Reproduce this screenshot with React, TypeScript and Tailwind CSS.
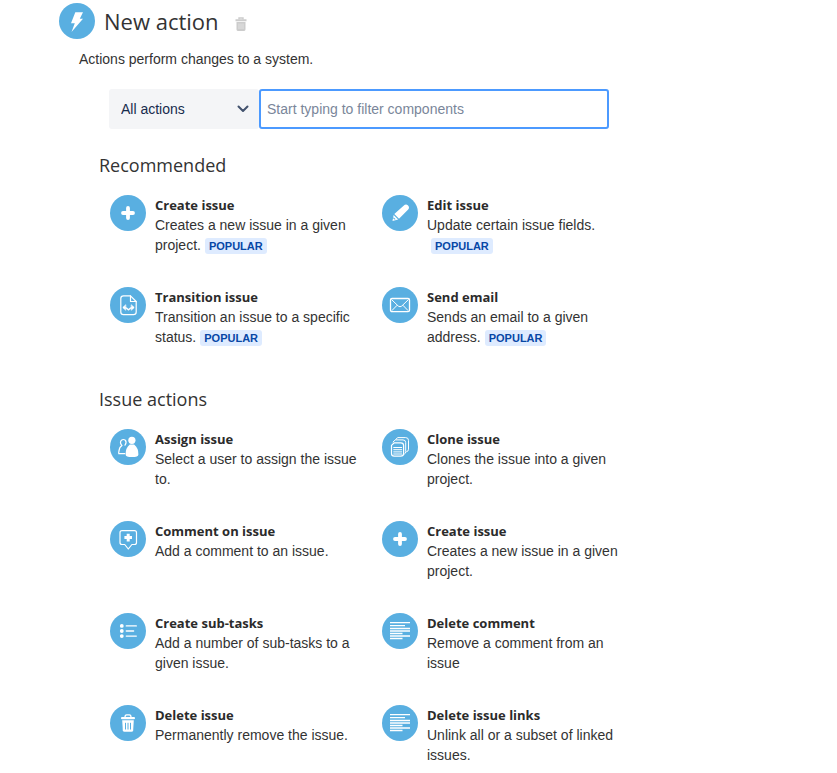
import React, { useState } from 'react';

type IconName =
  | 'bolt'
  | 'plus'
  | 'pencil'
  | 'transition'
  | 'mail'
  | 'users'
  | 'copy'
  | 'comment'
  | 'list'
  | 'text'
  | 'trash';

type Action = {
  title: string;
  description: string;
  icon: IconName;
  popular?: boolean;
};

const RECOMMENDED: Action[] = [
  { title: 'Create issue', description: 'Creates a new issue in a given project.', icon: 'plus', popular: true },
  { title: 'Edit issue', description: 'Update certain issue fields.', icon: 'pencil', popular: true },
  { title: 'Transition issue', description: 'Transition an issue to a specific status.', icon: 'transition', popular: true },
  { title: 'Send email', description: 'Sends an email to a given address.', icon: 'mail', popular: true },
];

const ISSUE_ACTIONS: Action[] = [
  { title: 'Assign issue', description: 'Select a user to assign the issue to.', icon: 'users' },
  { title: 'Clone issue', description: 'Clones the issue into a given project.', icon: 'copy' },
  { title: 'Comment on issue', description: 'Add a comment to an issue.', icon: 'comment' },
  { title: 'Create issue', description: 'Creates a new issue in a given project.', icon: 'plus' },
  { title: 'Create sub-tasks', description: 'Add a number of sub-tasks to a given issue.', icon: 'list' },
  { title: 'Delete comment', description: 'Remove a comment from an issue', icon: 'text' },
  { title: 'Delete issue', description: 'Permanently remove the issue.', icon: 'trash' },
  { title: 'Delete issue links', description: 'Unlink all or a subset of linked issues.', icon: 'text' },
];

const GLYPHS: Record<IconName, React.ReactNode> = {
  bolt: <path d="M16.3 9.3H24l-3.2 6.4H24L12.5 29l3.3-8.7H12z" fill="#fff" />,
  plus: <path d="M18 13v10M13 18h10" stroke="#fff" strokeWidth="3.8" strokeLinecap="round" />,
  pencil: (
    <g fill="#fff">
      <path d="M21.6 10.8q2.1-2 4.2-.6 2.2 2.2.4 4.3L17 23.7l-4.7-4.6z" />
      <path d="M11.6 20l4.5 4.6-5.6 1.3z" />
      <path d="M11.5 22.2l2.2 2-1.3.4-1.2-1.1z" fill="#59afe1" />
    </g>
  ),
  transition: (
    <g stroke="#fff" strokeLinejoin="round" strokeLinecap="round">
      <path d="M20.5 8.800h-7q-2.700 0-2.700 2.700v13.500q0 2.700 2.700 2.700h10q2.700 0 2.700-2.700V14.500z" strokeWidth="1.200" />
      <path d="M20.500 8.800v5.700h5.700" strokeWidth="1.200" />
      <path d="M13.700 20.500q3.300 0 4.800 2.300 1.500-2.300 4.800-2.300" strokeWidth="1.500" />
      <path d="M15.500 18l-2.700 2.500 2.700 2.500zM21.500 18l2.700 2.500-2.700 2.500z" strokeWidth=".7" fill="#fff" />
    </g>
  ),
  mail: (
    <g stroke="#fff" strokeWidth="1" strokeLinejoin="round">
      <rect x="8.500" y="11.500" width="19" height="13.200" rx="1.500" strokeWidth="1.300" />
      <path d="M9.500 12.500l6.800 6.600q1.700 1.300 3.400 0l6.800-6.600M9.800 23.700l5.400-5.500M26.200 23.700l-5.400-5.500" />
    </g>
  ),
  users: (
    <g>
      <path
        d="M11.500 16.200q-2-2.900 0-5 1.800-1.400 3.800 0 1.700 2.200-.3 5M12 16.500q-2.700 1.500-3 5.500-.5 1.500-.2 2.600h6"
        stroke="#fff"
        strokeWidth="1.200"
        strokeLinecap="round"
      />
      <circle cx="21.900" cy="11.300" r="3.600" fill="#fff" />
      <path d="M19.800 15.500h4.300q4.500 3.500 4.300 10 0 2.600-6.400 2.600t-6.400-2.600q-.2-6.500 4.200-10z" fill="#fff" />
    </g>
  ),
  copy: (
    <g stroke="#fff" strokeWidth="1" strokeLinejoin="round">
      <path d="M13.500 10.600l2.300-2h7.900q2.800 0 2.800 2.800v8.800q0 2.300-2.300 2.700" />
      <path d="M10.800 13.200l2.500-2.300h7.700q2.700 0 2.700 2.700v9q0 2-1.500 2.600" />
      <path d="M12.300 13.800h6.500q2.800 0 2.800 2.800v8q0 2.600-2.800 2.600h-6.700q-2.600 0-2.600-2.600v-8.200z" strokeWidth="1.200" />
      <path d="M11.300 18.500h8.800M11.300 20.700h8.800M11.300 22.900h8.800M11.300 25h8.800" />
    </g>
  ),
  comment: (
    <g stroke="#fff" strokeLinejoin="round">
      <path d="M12 9.700h12.500q2 0 2 2v9.800q0 2-2 2h-2.600L18.300 28l-3.600-4.500H12q-2 0-2-2v-9.800q0-2 2-2z" strokeWidth="1.200" />
      <path d="M18.200 12.800v7.600M14.400 16.600h7.600" strokeWidth="3" />
    </g>
  ),
  list: (
    <g>
      <g fill="#fff">
        <circle cx="11.800" cy="12.900" r="1.900" />
        <circle cx="11.800" cy="18" r="1.900" />
        <circle cx="11.800" cy="23.100" r="1.900" />
      </g>
      <path d="M16.300 12.900h10M16.300 18h7.300M16.300 23.100h10" stroke="#fff" strokeWidth="1.400" strokeLinecap="round" />
    </g>
  ),
  text: (
    <path
      d="M8 9.700h20M8 12.700h15M8 15.500h20M8 18h20M8 20.500h12.500M8 23h20M8 25.500h12.500"
      stroke="#fff"
      strokeWidth="1.300"
    />
  ),
  trash: (
    <g>
      <path d="M15 12.300q0-2.500 1.600-2.500h2.800q1.600 0 1.600 2.500" stroke="#fff" strokeWidth="1.300" />
      <rect x="11" y="12" width="14" height="2.300" rx="1" fill="#fff" />
      <path d="M12.200 15.300h11.600l-.6 10q-.2 1.500-1.600 1.500h-7.200q-1.400 0-1.600-1.500z" fill="#fff" />
      <path d="M15.500 17.800v6.700M18 17.800v6.700M20.500 17.800v6.700" stroke="#59afe1" strokeWidth="1" />
    </g>
  ),
};

const ActionIcon: React.FC<{ name: IconName }> = ({ name }) => (
  <svg viewBox="0 0 36 36" fill="none" className="w-9 h-9 shrink-0" aria-hidden="true">
    <circle cx="18" cy="18" r="18" fill="#59afe1" />
    {GLYPHS[name]}
  </svg>
);

const ActionItem: React.FC<{ action: Action }> = ({ action }) => (
  <li>
    <button type="button" className="flex items-start gap-[9px] w-full min-h-15 pr-5 text-left text-sm leading-5 cursor-pointer">
      <ActionIcon name={action.icon} />
      <span>
        <span className="block font-['Open_Sans',sans-serif] text-[13px] leading-5 font-bold text-[#2b2b2b]">{action.title}</span>
        {action.description}
        {action.popular && (
          <span className="inline-block ml-1 px-1 rounded-[3px] bg-[#deebff] text-[11px] leading-4 font-bold uppercase text-[#0747a6]">
            Popular
          </span>
        )}
      </span>
    </button>
  </li>
);

const ActionSection: React.FC<{ title: string; actions: Action[] }> = ({ title, actions }) => (
  <section>
    <h2 className="pl-5 font-['Open_Sans',sans-serif] text-[18px] leading-6 text-[#333]">{title}</h2>
    <ul className="grid grid-cols-2 gap-y-8 max-w-[575px] mt-[18px] pl-[31px]">
      {actions.map((action, i) => (
        <ActionItem key={i} action={action} />
      ))}
    </ul>
  </section>
);

const App: React.FC = () => {
  const [category, setCategory] = useState('all');
  const [query, setQuery] = useState('');

  const matches = (action: Action) => action.title.toLowerCase().includes(query.trim().toLowerCase());
  const recommended = RECOMMENDED.filter(matches);
  const issueActions = ISSUE_ACTIONS.filter(matches);

  return (
    <main className="bg-white pt-[3px] pl-[59px] pr-6 pb-2 font-['Liberation_Sans',Arial,sans-serif] text-sm leading-5 text-[#333]">
      <header className="flex items-center">
        <ActionIcon name="bolt" />
        <h1 className="ml-[9px] font-['Open_Sans',sans-serif] text-[22px] leading-9 text-[#333]">New action</h1>
        <button type="button" aria-label="Delete action" className="ml-3.5 mt-1.5 p-0.5 cursor-pointer">
          <svg width="12" height="14" viewBox="0 0 12 14" fill="none">
            <path d="M4 2.500V1h4v1.500" stroke="#ccc" strokeWidth="1.400" />
            <path d="M.5 2.200h11v2H.5zM1.500 5h9v7.600q0 1.400-1.300 1.400H2.800q-1.300 0-1.300-1.400z" fill="#ccc" />
            <path d="M4 6.500v5.500M6 6.500v5.500M8 6.500v5.500" stroke="#e8e8e8" strokeWidth=".8" />
          </svg>
        </button>
      </header>
      <p className="mt-2.5 pl-5">Actions perform changes to a system.</p>

      <div className="flex max-w-[550px] mt-5 pl-[50px]">
        <div className="relative w-[150px] shrink-0">
          <select
            aria-label="Action category"
            value={category}
            onChange={(e) => setCategory(e.target.value)}
            className="appearance-none w-full h-10 pl-3 pr-8 rounded-[3px] bg-[#f4f5f7] text-sm text-[#172b4d] focus:outline-none"
          >
            <option value="all">All actions</option>
            <option value="recommended">Recommended</option>
            <option value="issue">Issue actions</option>
          </select>
          <svg className="absolute right-2.5 top-4 pointer-events-none" width="12" height="8" viewBox="0 0 12 8" fill="none">
            <path d="M1.500 1.500L6 6l4.500-4.500" stroke="#42526e" strokeWidth="2" strokeLinecap="round" strokeLinejoin="round" />
          </svg>
        </div>
        <input
          type="text"
          aria-label="Filter components"
          placeholder="Start typing to filter components"
          value={query}
          onChange={(e) => setQuery(e.target.value)}
          className="grow min-w-0 h-10 px-1.5 rounded-[3px] border-2 border-[#4c9aff] bg-white text-sm text-[#172b4d] placeholder:text-[#7a869a] focus:outline-none"
        />
      </div>

      <div className="flex flex-col gap-10 mt-6 pl-5">
        {category !== 'issue' && <ActionSection title="Recommended" actions={recommended} />}
        {category !== 'recommended' && <ActionSection title="Issue actions" actions={issueActions} />}
      </div>
    </main>
  );
};

export default App;
